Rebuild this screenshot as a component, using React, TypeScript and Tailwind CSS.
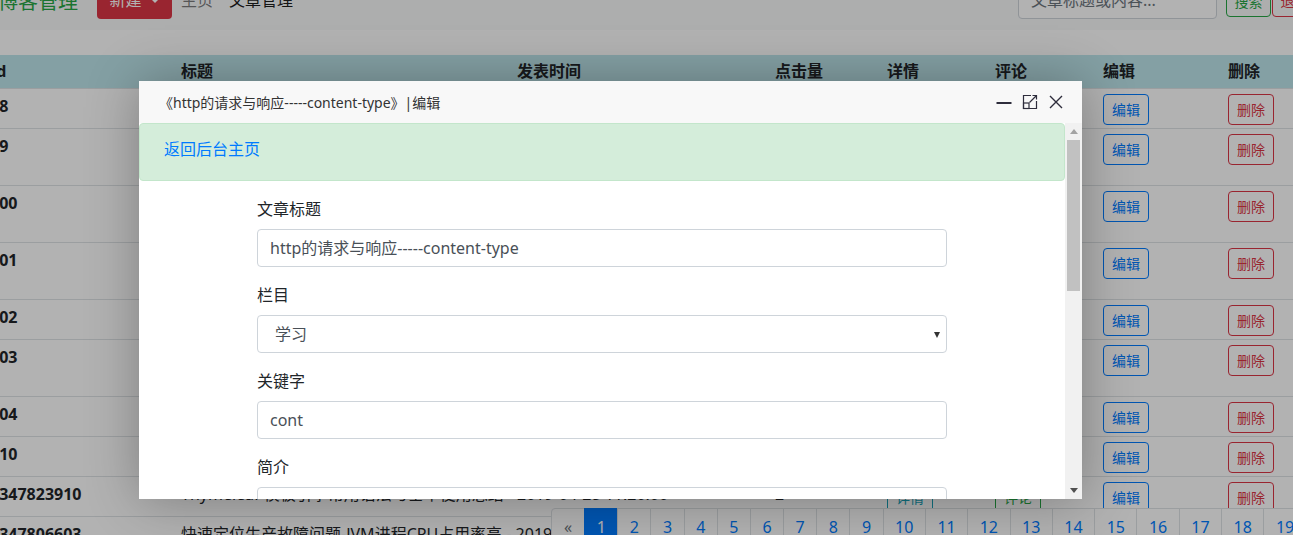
import React from 'react';

const font = "font-['Noto_Sans','Noto_Sans_CJK_SC',sans-serif]";

interface Row {
  id: string;
  h: number;
  title: string;
  time: string;
  clicks: string;
  nowrap?: boolean;
}

const rows: Row[] = [
  { id: '98', h: 40, title: 'Spring Boot 整合 MyBatis', time: '2019-04-15 21:33:10', clicks: '12' },
  { id: '99', h: 57, title: 'Java 多线程与并发编程学习笔记 - 线程池', time: '2019-04-16 09:12:45', clicks: '8' },
  { id: '100', h: 57, title: 'MySQL 索引原理以及查询优化总结', time: '2019-04-17 20:01:33', clicks: '21' },
  { id: '101', h: 57, title: 'Redis 缓存穿透、缓存击穿与缓存雪崩', time: '2019-04-18 22:45:02', clicks: '17' },
  { id: '102', h: 40, title: 'Linux 常用命令', time: '2019-04-20 10:30:18', clicks: '5' },
  { id: '103', h: 57, title: 'Nginx 反向代理与负载均衡配置详解', time: '2019-04-21 14:22:51', clicks: '9' },
  { id: '104', h: 40, title: 'Git 使用总结', time: '2019-04-22 19:05:37', clicks: '3' },
  { id: '110', h: 40, title: 'http的请求与响应-----content-type', time: '2019-04-25 16:48:09', clicks: '6' },
  { id: '1347823910', h: 40, title: 'Thymeleaf 模板引擎常用语法与基本使用总结', time: '2019-04-28 11:20:00', clicks: '2' },
  { id: '1347806603', h: 40, title: '快速定位生产故障问题-JVM进程CPU占用率高 - 2019年', time: '', clicks: '', nowrap: true },
];

const pages = ['1', '2', '3', '4', '5', '6', '7', '8', '9', '10', '11', '12', '13', '14', '15', '16', '17', '18', '19', '20'];

const Navbar = () => (
  <div className="-mt-[27px] h-[57px] bg-[#f8f9fa] flex items-start pt-[8px] relative">
    <span className="-ml-[2px] mt-[6px] text-[20px] leading-[30px] text-[#28a745]">博客管理</span>
    <button className="ml-[19px] h-[38px] w-[75px] rounded bg-[#dc3545] text-white text-[16px] flex items-center justify-center gap-2">
      新建
      <span className="border-t-[5px] border-t-white border-x-[5px] border-x-transparent" />
    </button>
    <span className="ml-[9px] mt-[7px] text-[16px] leading-[24px] text-black/50">主页</span>
    <span className="ml-[16px] mt-[7px] text-[16px] leading-[24px] text-black/90">文章管理</span>
    <div className="ml-auto -mr-[24px] flex items-start">
      <div className="w-[199px] h-[38px] border border-[#ced4da] rounded bg-white px-3 flex items-center text-[16px] text-[#6c757d]">
        文章标题或内容...
      </div>
      <button className="ml-[9px] mt-[5px] w-[45px] h-[31px] border border-[#28a745] rounded text-[#28a745] text-[14px]">搜索</button>
      <button className="ml-[1px] mt-[5px] w-[45px] h-[31px] border border-[#dc3545] rounded text-[#dc3545] text-[14px] shrink-0">退出</button>
    </div>
  </div>
);

const Table = () => (
  <table className="table-fixed border-collapse -ml-[15px] w-[1400px] text-[#212529] text-[16px]">
    <colgroup>
      <col className="w-[191px]" />
      <col className="w-[336px]" />
      <col className="w-[258px]" />
      <col className="w-[112px]" />
      <col className="w-[108px]" />
      <col className="w-[108px]" />
      <col className="w-[125px]" />
      <col />
    </colgroup>
    <thead>
      <tr className="bg-[#bee5eb] h-[33px]">
        {['Id', '标题', '发表时间', '点击量', '详情', '评论', '编辑', '删除'].map((h) => (
          <th key={h} className="px-[5px] text-left font-bold leading-[24px] align-middle border-b border-[#dee2e6]">
            {h}
          </th>
        ))}
      </tr>
    </thead>
    <tbody>
      {rows.map((r) => (
        <tr key={r.id} style={{ height: r.h }} className="border-t border-[#dee2e6]">
          <td className="px-[5px] pt-[5px] align-top font-bold leading-[24px]">{r.id}</td>
          <td className={`px-[5px] pt-[5px] align-top leading-[24px] ${r.nowrap ? 'whitespace-nowrap' : ''}`}>{r.title}</td>
          <td className="px-[5px] pt-[5px] align-top leading-[24px]">{r.time}</td>
          <td className="px-[5px] pt-[5px] align-top leading-[24px]">{r.clicks}</td>
          <td className="px-[5px] pt-[5px] align-top">
            {r.time && (
              <span className="inline-flex w-[46px] h-[31px] items-center justify-center border border-[#17a2b8] rounded text-[14px] text-[#17a2b8]">详情</span>
            )}
          </td>
          <td className="px-[5px] pt-[5px] align-top">
            {r.time && (
              <span className="inline-flex w-[46px] h-[31px] items-center justify-center border border-[#28a745] rounded text-[14px] text-[#28a745]">评论</span>
            )}
          </td>
          <td className="px-[5px] pt-[5px] align-top">
            <span className="inline-flex w-[46px] h-[31px] items-center justify-center border border-[#007bff] rounded text-[14px] text-[#007bff]">编辑</span>
          </td>
          <td className="px-[5px] pt-[5px] align-top">
            <span className="inline-flex w-[46px] h-[31px] items-center justify-center border border-[#dc3545] rounded text-[14px] text-[#dc3545]">删除</span>
          </td>
        </tr>
      ))}
    </tbody>
  </table>
);

const Pagination = () => (
  <div className="absolute left-[551px] top-[508px] flex text-[16px] leading-[20px]">
    <span className="px-3 py-2 border border-[#dee2e6] bg-white text-[#6c757d] rounded-l">«</span>
    {pages.map((p) => (
      <span
        key={p}
        className={`-ml-px px-[11.5px] py-2 border ${p === '1' ? 'bg-[#007bff] border-[#007bff] text-white' : 'bg-white border-[#dee2e6] text-[#007bff]'}`}
      >
        {p}
      </span>
    ))}
  </div>
);

const Field = ({ label, children }: { label: string; children: React.ReactNode }) => (
  <div className="mb-4">
    <div className="mb-2 text-[16px] leading-[24px] text-[#212529]">{label}</div>
    {children}
  </div>
);

const inputCls = 'h-[38px] border border-[#ced4da] rounded bg-white px-3 flex items-center text-[16px] text-[#495057]';

const Modal = () => (
  <div className="absolute left-[139px] top-[81px] w-[943px] h-[418px] bg-white shadow-[1px_1px_50px_rgba(0,0,0,0.3)] flex flex-col">
    <div className="h-[42px] shrink-0 bg-[#f8f8f8] flex items-center pl-5 pr-[18px] text-[14px] text-[#333]">
      <span>《http的请求与响应-----content-type》|编辑</span>
      <div className="ml-auto flex items-center gap-[10px]">
        <svg width="16" height="16" viewBox="0 0 16 16">
          <path d="M0.5 9h15" stroke="#2e2d3c" strokeWidth="2" />
        </svg>
        <svg width="16" height="16" viewBox="0 0 16 16" fill="none" stroke="#2e2d3c" strokeWidth="1.2">
          <path d="M9 1.5H1.5v13h13V7" />
          <rect x="1.5" y="9" width="5.5" height="5.5" />
          <path d="M7.5 8.5L14.5 1.5M10.5 1.5h4v4" />
        </svg>
        <svg width="16" height="16" viewBox="0 0 16 16" fill="none" stroke="#2e2d3c" strokeWidth="1.4">
          <path d="M2 2l12 12M14 2L2 14" />
        </svg>
      </div>
    </div>
    <div className="flex-1 flex overflow-hidden">
      <div className="flex-1 overflow-hidden">
        <div className="h-[58px] border border-[#c3e6cb] bg-[#d4edda] rounded pt-[13px] px-6 mb-4">
          <span className="text-[16px] leading-[24px] text-[#007bff]">返回后台主页</span>
        </div>
        <div className="ml-[118px] w-[690px]">
          <Field label="文章标题">
            <div className={inputCls}>http的请求与响应-----content-type</div>
          </Field>
          <Field label="栏目">
            <div className={`${inputCls} pl-[17px] relative`}>
              学习
              <span className="absolute right-[6px] top-[16px] border-t-[6px] border-t-[#333] border-x-[3px] border-x-transparent" />
            </div>
          </Field>
          <Field label="关键字">
            <div className={inputCls}>cont</div>
          </Field>
          <Field label="简介">
            <div className="h-[62px] border border-[#ced4da] rounded bg-white" />
          </Field>
        </div>
      </div>
      <div className="w-[17px] bg-[#f1f1f1] flex flex-col items-center">
        <span className="mt-[6px] border-b-[5px] border-b-[#a3a3a3] border-x-[4px] border-x-transparent" />
        <div className="mt-[6px] w-[13px] h-[151px] bg-[#c1c1c1]" />
        <span className="mt-auto mb-[6px] border-t-[5px] border-t-[#505050] border-x-[4px] border-x-transparent" />
      </div>
    </div>
  </div>
);

export default function App() {
  return (
    <div className={`relative w-[1293px] h-[535px] overflow-hidden bg-white ${font}`}>
      <Navbar />
      <div className="h-[25px]" />
      <Table />
      <Pagination />
      <div className="absolute inset-0 bg-black/30" />
      <Modal />
    </div>
  );
}
